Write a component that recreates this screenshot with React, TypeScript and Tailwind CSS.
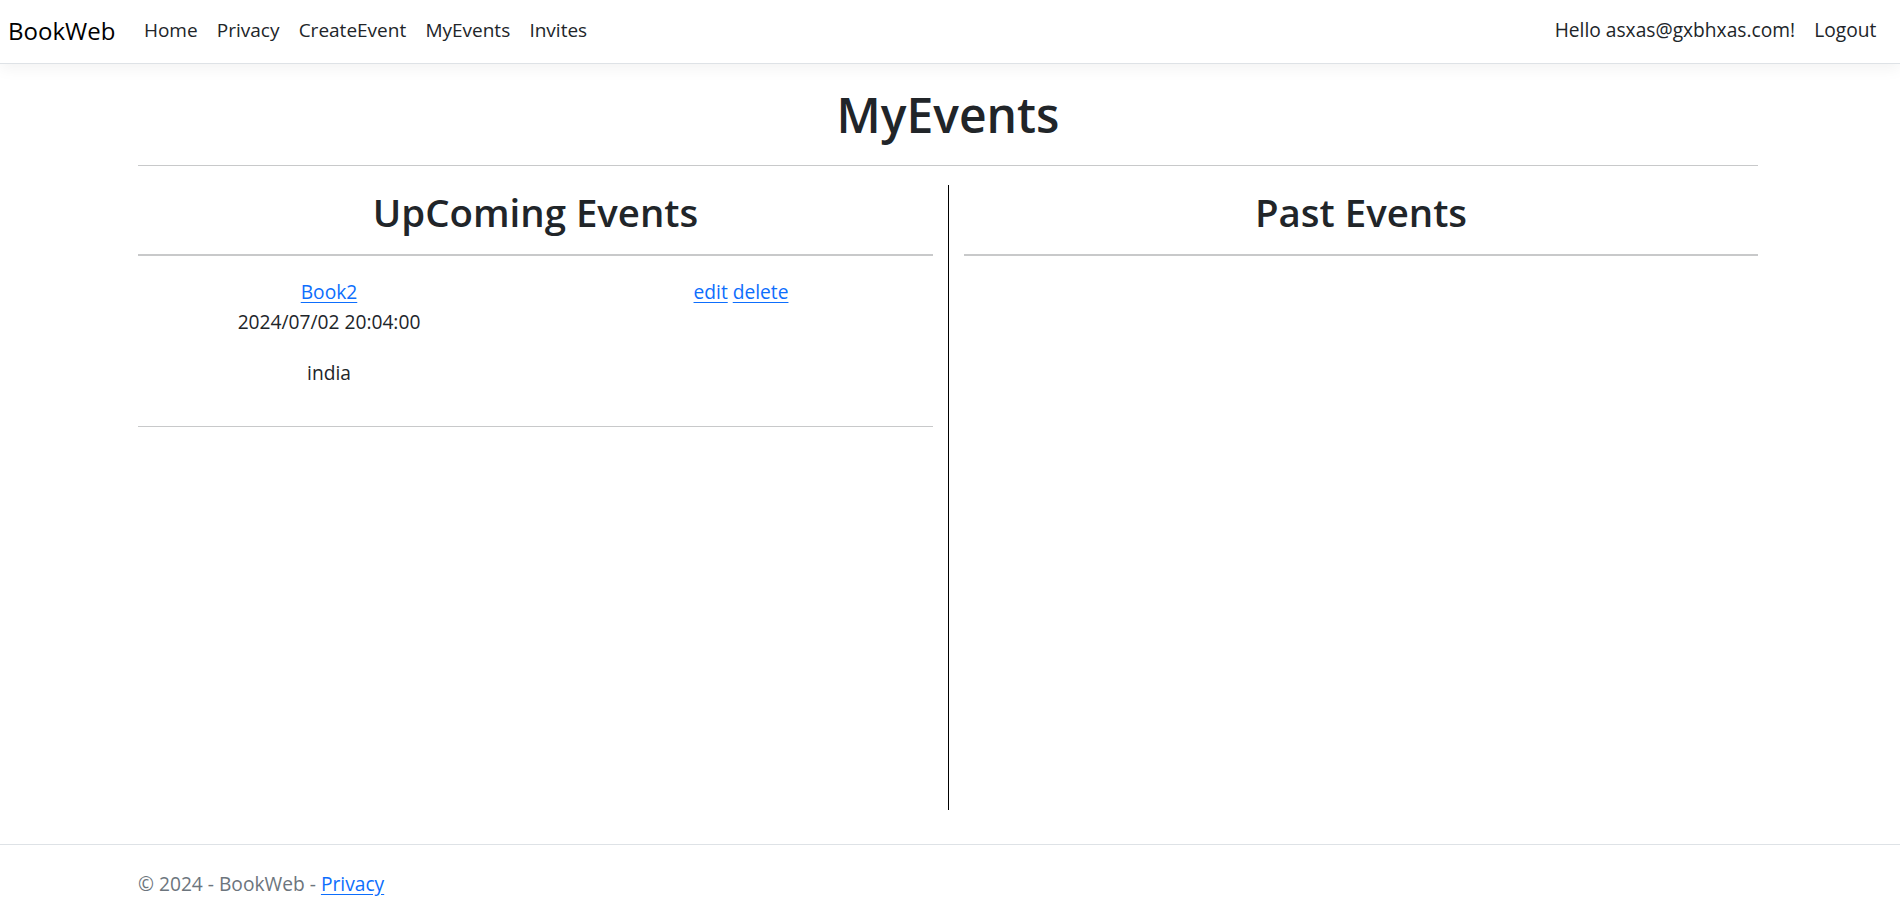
import React from "react";

export default function App() {
  const font = { fontFamily: '"Open Sans", "Noto Sans", "Liberation Sans", sans-serif' };
  return (
    <div className="h-[903px] flex flex-col bg-white text-[#212529] overflow-hidden" style={font}>
      {/* Navbar */}
      <nav className="h-[64px] shrink-0 flex items-center justify-between border-b border-[#dee2e6] shadow-[0_4.8px_14.4px_rgba(0,0,0,0.05)] pl-[8px] pr-[14px] pb-[2px] relative z-10">
        <div className="flex items-center">
          <a className="text-[24px] text-black mr-[19px] leading-[36px]">BookWeb</a>
          <ul className="flex items-center text-[19px] leading-[28.8px]">
            <li className="px-[9.6px]">Home</li>
            <li className="px-[9.6px]">Privacy</li>
            <li className="px-[9.6px]">CreateEvent</li>
            <li className="px-[9.6px]">MyEvents</li>
            <li className="px-[9.6px]">Invites</li>
          </ul>
        </div>
        <ul className="flex items-center text-[19.2px] leading-[28.8px]">
          <li className="px-[9.6px]">Hello asxas@gxbhxas.com!</li>
          <li className="px-[9.6px]">Logout</li>
        </ul>
      </nav>

      {/* Main */}
      <main className="flex-1 pl-[138px] pr-[142px]">
        <h1 className="text-[48px] font-semibold leading-[57.6px] text-center mt-[22px] mb-[21px]">MyEvents</h1>
        <div className="h-px bg-[#c8c9ca]" />
        <div className="flex mt-[19px]">
          <div className="w-[811px] h-[625px] pr-[15px] border-r border-black">
            <h2 className="text-[38.4px] font-semibold leading-[46px] text-center mt-[4px] mb-[19px]">UpComing Events</h2>
            <div className="h-[2px] bg-[#c8c9ca]" />
            <div className="flex text-[19.2px] leading-[30px] mt-[21px]">
              <div className="w-[382px] text-center">
                <a className="text-[#0d6efd] underline underline-offset-[3px]">Book2</a>
                <p className="mb-[21px]">2024/07/02 20:04:00</p>
                <p className="mb-[19px]">india</p>
              </div>
              <div className="w-[29px]" />
              <div className="w-[384px] text-center">
                <a className="text-[#0d6efd] underline underline-offset-[3px]">edit</a>{" "}
                <a className="text-[#0d6efd] underline underline-offset-[3px]">delete</a>
              </div>
            </div>
            <div className="h-px bg-[#c8c9ca] mt-[19px]" />
          </div>
          <div className="flex-1 pl-[15px]">
            <h2 className="text-[38.4px] font-semibold leading-[46px] text-center mt-[4px] mb-[19px]">Past Events</h2>
            <div className="h-[2px] bg-[#c8c9ca]" />
          </div>
        </div>
      </main>

      {/* Footer */}
      <footer className="h-[59px] shrink-0 border-t border-[#dee2e6] pl-[138px] pt-[25px] text-[19.2px] leading-[28.8px] text-[#6c757d] whitespace-nowrap">
        © 2024 - BookWeb - <a className="text-[#0d6efd] underline underline-offset-[3px]">Privacy</a>
      </footer>
    </div>
  );
}
